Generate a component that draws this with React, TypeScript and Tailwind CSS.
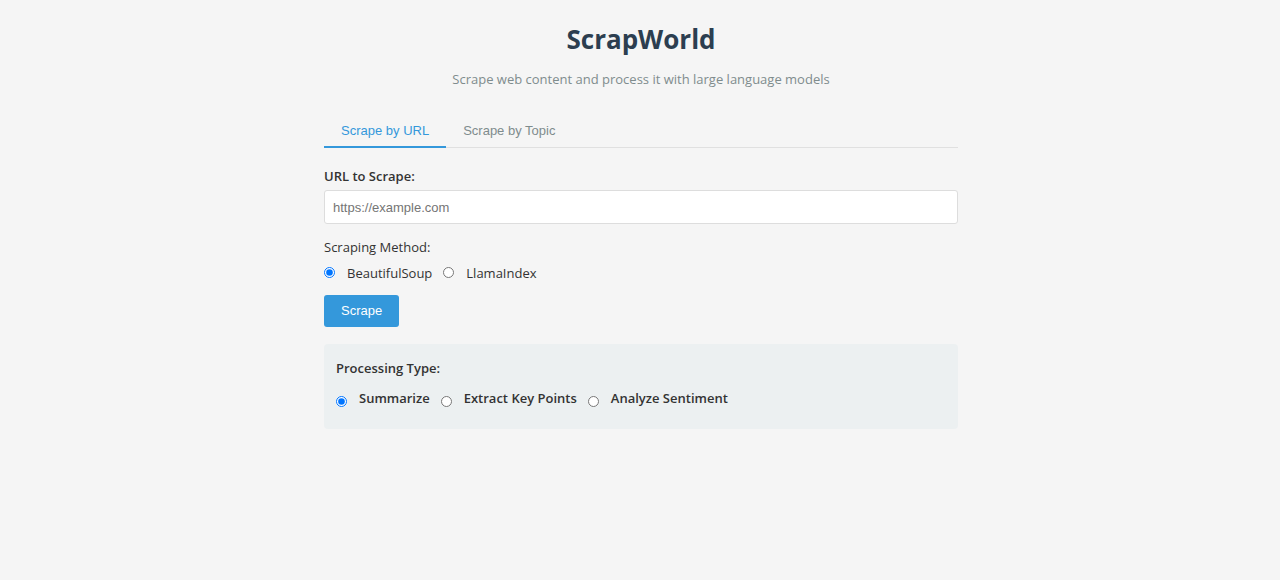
import { useState } from "react";

const methods = ["BeautifulSoup", "LlamaIndex"];
const processingTypes = ["Summarize", "Extract Key Points", "Analyze Sentiment"];
const tabs = ["Scrape by URL", "Scrape by Topic"];

export default function App() {
  const [tab, setTab] = useState(tabs[0]);
  const [method, setMethod] = useState(methods[0]);
  const [processing, setProcessing] = useState(processingTypes[0]);

  return (
    <div className="min-h-screen bg-[#f5f5f5] pt-[19px] pr-4 pb-8 pl-[18px] font-['Open_Sans',sans-serif] text-[13px] leading-5 text-[#333333]">
      <main className="mx-auto max-w-[634px]">
        <header className="text-center">
          <h1 className="text-[26px] leading-10 font-bold text-[#2c3e50]">ScrapWorld</h1>
          <p className="mt-2.5 text-[#7f8c8d]">Scrape web content and process it with large language models</p>
        </header>

        <div role="tablist" className="mt-[25px] flex border-b border-[#e0e0e0] font-['Liberation_Sans',Arial,sans-serif] text-[13px]">
          {tabs.map((name) => (
            <button
              key={name}
              type="button"
              role="tab"
              aria-selected={tab === name}
              onClick={() => setTab(name)}
              className={
                tab === name
                  ? "-mb-px border-b-2 border-[#3498db] px-[17px] pt-[7px] pb-[5px] text-[#3498db]"
                  : "-mb-px border-b-2 border-transparent px-[17px] pt-[7px] pb-[5px] text-[#7f8c8d]"
              }
            >
              {name}
            </button>
          ))}
        </div>

        <form onSubmit={(event) => event.preventDefault()} className="mt-[18px]">
          <label htmlFor="url" className="block font-semibold">URL to Scrape:</label>
          <input
            id="url"
            type="url"
            placeholder="https://example.com"
            className="mt-1 block h-[34px] w-full rounded-[3px] border border-[#dddddd] bg-white px-2 font-['Liberation_Sans',Arial,sans-serif] text-[13px] placeholder:text-[#757575]"
          />

          <fieldset className="mt-[13px]">
            <legend>Scraping Method:</legend>
            <div className="mt-1.5 flex gap-[11px]">
              {methods.map((name) => (
                <label key={name} className="flex items-start gap-3">
                  <input
                    type="radio"
                    name="method"
                    checked={method === name}
                    onChange={() => setMethod(name)}
                    className="mt-1 size-[11px]"
                  />
                  {name}
                </label>
              ))}
            </div>
          </fieldset>

          <button
            type="submit"
            className="mt-3 h-8 rounded-[3px] bg-[#3498db] px-[17px] font-['Liberation_Sans',Arial,sans-serif] text-[13px] text-white"
          >
            Scrape
          </button>
        </form>

        <section className="mt-[17px] rounded-[4px] bg-[#ecf0f1] px-3 pt-3.5 pb-[21px]">
          <fieldset>
            <legend className="font-semibold">Processing Type:</legend>
            <div className="mt-2.5 flex flex-wrap gap-[11px] font-semibold">
              {processingTypes.map((name) => (
                <label key={name} className="flex items-start gap-3">
                  <input
                    type="radio"
                    name="processing"
                    checked={processing === name}
                    onChange={() => setProcessing(name)}
                    className="mt-2 size-[11px]"
                  />
                  {name}
                </label>
              ))}
            </div>
          </fieldset>
        </section>
      </main>
    </div>
  );
}
